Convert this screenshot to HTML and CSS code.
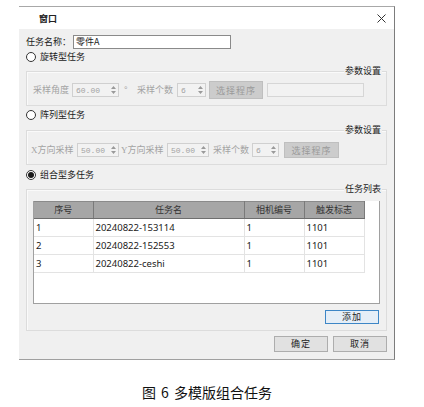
FILE: index.html
```html
<!DOCTYPE html>
<html lang="zh">
<head>
<meta charset="utf-8">
<title>窗口</title>
<link rel="stylesheet" href="styles.css">
</head>
<body>
<div class="window">
  <div class="titlebar">
    <span class="title">窗口</span>
    <svg class="close" width="9" height="9" viewBox="0 0 9 9"><path d="M0.5 0.5 L8.5 8.5 M8.5 0.5 L0.5 8.5" stroke="#333" stroke-width="1" fill="none"/></svg>
  </div>
  <div class="body">
    <div class="name-row">
      <span class="lbl">任务名称：</span>
      <div class="name-input">零件A</div>
    </div>
    <div class="radio-row r1"><span class="radio"></span><span>旋转型任务</span></div>
    <div class="group g1">
      <span class="legend">参数设置</span>
      <span class="dis w36">采样角度</span>
      <div class="spin s47"><span>60.00</span><svg width="5" height="8" viewBox="0 0 5 8"><path d="M0 3 L2.5 0 L5 3Z M0 5 L2.5 8 L5 5Z" fill="#9a9a9a"/></svg></div>
      <span class="dis deg">°</span>
      <span class="dis w36 ml-a">采样个数</span>
      <div class="spin s29"><span>6</span><svg width="5" height="8" viewBox="0 0 5 8"><path d="M0 3 L2.5 0 L5 3Z M0 5 L2.5 8 L5 5Z" fill="#9a9a9a"/></svg></div>
      <div class="btn-dis b1">选择程序</div>
      <div class="field"></div>
    </div>
    <div class="radio-row r2"><span class="radio"></span><span>阵列型任务</span></div>
    <div class="group g2">
      <span class="legend">参数设置</span>
      <span class="dis w45"><span class="lat">X</span>方向采样</span>
      <div class="spin s42"><span>50.00</span><svg width="5" height="8" viewBox="0 0 5 8"><path d="M0 3 L2.5 0 L5 3Z M0 5 L2.5 8 L5 5Z" fill="#9a9a9a"/></svg></div>
      <span class="dis w45 ml2"><span class="lat">Y</span>方向采样</span>
      <div class="spin s42 ml3"><span>50.00</span><svg width="5" height="8" viewBox="0 0 5 8"><path d="M0 3 L2.5 0 L5 3Z M0 5 L2.5 8 L5 5Z" fill="#9a9a9a"/></svg></div>
      <span class="dis w36 ml4">采样个数</span>
      <div class="spin s27"><span>6</span><svg width="5" height="8" viewBox="0 0 5 8"><path d="M0 3 L2.5 0 L5 3Z M0 5 L2.5 8 L5 5Z" fill="#9a9a9a"/></svg></div>
      <div class="btn-dis b2">选择程序</div>
    </div>
    <div class="radio-row r3"><span class="radio checked"></span><span>组合型多任务</span></div>
    <div class="group g3">
      <span class="legend">任务列表</span>
      <div class="tablebox">
        <table>
          <thead>
            <tr><th class="c1">序号</th><th class="c2">任务名</th><th class="c3">相机编号</th><th class="c4">触发标志</th></tr>
          </thead>
          <tbody>
            <tr><td>1</td><td>20240822-153114</td><td>1</td><td>1101</td></tr>
            <tr><td>2</td><td>20240822-152553</td><td>1</td><td>1101</td></tr>
            <tr><td>3</td><td>20240822-ceshi</td><td>1</td><td>1101</td></tr>
          </tbody>
        </table>
      </div>
      <div class="add-row"><div class="btn btn-focus">添加</div></div>
    </div>
    <div class="btn-row">
      <div class="btn">确定</div>
      <div class="btn">取消</div>
    </div>
  </div>
</div>
<div class="caption">图 6 多模版组合任务</div>
</body>
</html>
```

FILE: styles.css
```css
* { box-sizing: border-box; }
html, body { margin: 0; padding: 0; background: #ffffff; }
body {
  width: 424px;
  height: 407px;
  overflow: hidden;
  font-family: "Noto Sans CJK SC", "Noto Sans", sans-serif;
  font-size: 9px;
  color: #1a1a1a;
}
.window {
  margin: 6px 0 0 19px;
  width: 376px;
  border-top: 1px solid #a8a8a8;
  border-right: 1px solid #7c7c7c;
  border-bottom: 1px solid #a0a0a0;
}
.titlebar {
  height: 22px;
  background: #ffffff;
  display: flex;
  align-items: center;
  justify-content: space-between;
  padding: 0 8px 0 20px;
}
.title { font-size: 9px; color: #222; font-weight: bold; line-height: 10px; margin-top: 1px; }
.close { margin-top: 1px; }
.body {
  background: #f0f0f0;
  padding: 6px 7px 7px 7px;
}
.name-row {
  height: 14px;
  display: flex;
  align-items: center;
}
.lbl { width: 47px; line-height: 12px; }
.name-input {
  width: 158px;
  height: 14px;
  border: 1px solid #8a8a8a;
  background: #fff;
  line-height: 11px;
  padding-left: 2px;
  font-size: 9px;
}
.radio-row {
  height: 14px;
  display: flex;
  align-items: center;
  line-height: 12px;
}
.r1 { margin-top: 1px; }
.r2 { margin-top: 2px; }
.r3 { margin-top: 3px; }
.radio {
  width: 10px;
  height: 10px;
  border: 1px solid #333;
  border-radius: 50%;
  background: #fff;
  margin-right: 4px;
  position: relative;
  display: flex;
  align-items: center;
  justify-content: center;
}
.radio.checked::after {
  content: "";
  width: 6px;
  height: 6px;
  border-radius: 50%;
  background: #1a1a1a;
}
.group {
  position: relative;
  border: 1px solid #dcdcdc;
  box-shadow: inset 1px 1px 0 #fafafa;
}
.legend {
  position: absolute;
  top: -7px;
  right: 4px;
  background: #f0f0f0;
  padding: 0 1px;
  line-height: 12px;
  color: #222;
}
.g1 {
  margin-top: 7px;
  height: 35px;
  display: flex;
  align-items: center;
  padding: 3px 0 0 6px;
}
.g2 {
  margin-top: 8px;
  height: 35px;
  display: flex;
  align-items: center;
  padding: 5px 0 0 4px;
}
.g3 {
  margin-top: 7px;
  height: 142px;
  padding: 11px 6px 0 6px;
}
.dis { color: #a3a3a3; line-height: 12px; white-space: nowrap; }
.w36 { width: 36px; }
.w45 { width: 45px; }
.lat { font-family: "Liberation Serif", serif; font-size: 9px; }
.deg { margin-left: 5px; width: 4px; font-family: "Liberation Sans", sans-serif; }
.ml-a { margin-left: 9px; }
.ml2 { margin-left: 2px; }
.ml3 { margin-left: 2px; }
.ml4 { margin-left: 4px; }
.spin {
  height: 14px;
  border: 1px solid #d0d0d0;
  background: #f2f2f2;
  display: flex;
  align-items: center;
  justify-content: space-between;
  padding: 0 2px 0 3px;
  margin-left: 3px;
  font-family: "Liberation Mono", monospace;
  font-size: 8px;
  color: #a3a3a3;
}
.s47 { width: 47px; }
.s29 { width: 29px; margin-left: 4px; }
.s42 { width: 42px; margin-left: 1px; }
.s27 { width: 27px; }
.btn-dis {
  background: #cccccc;
  border: 1px solid #bfbfbf;
  color: #9a9a9a;
  display: flex;
  align-items: center;
  justify-content: center;
  letter-spacing: 1px;
}
.b1 { width: 54px; height: 18px; margin-left: 3px; }
.b2 { width: 55px; height: 16px; margin-left: 5px; }
.field {
  width: 97px;
  height: 14px;
  margin-left: 4px;
  border: 1px solid #d6d6d6;
  background: #f2f2f2;
}
.tablebox {
  width: 347px;
  height: 103px;
  border: 1px solid #a0a0a0;
  border-top: none;
  background: #fff;
}
table {
  border-collapse: collapse;
  table-layout: fixed;
  font-family: "Noto Sans", "Noto Sans CJK SC", sans-serif;
  font-size: 9.5px;
}
th {
  height: 17px;
  background: #a6a6a6;
  border-right: 1px solid #7a7a7a;
  border-bottom: 1px solid #6e6e6e;
  border-top: 1px solid #8a8a8a;
  font-family: "Noto Sans CJK SC", sans-serif;
  font-size: 9px;
  font-weight: normal;
  color: #333;
  text-align: center;
  padding: 0;
  line-height: 12px;
}
.c1 { width: 59px; }
.c2 { width: 151px; }
.c3 { width: 60px; }
.c4 { width: 60px; }
td {
  height: 18px;
  border-right: 1px solid #e3e3e3;
  border-bottom: 1px solid #e3e3e3;
  padding: 0 0 0 2px;
  color: #1a1a1a;
  line-height: 12px;
  white-space: nowrap;
  overflow: hidden;
}
.add-row {
  display: flex;
  justify-content: flex-end;
  margin-top: 6px;
  padding-right: 1px;
}
.btn {
  width: 54px;
  height: 16px;
  background: #e1e1e1;
  border: 1px solid #adadad;
  display: flex;
  align-items: center;
  justify-content: center;
  color: #222;
  letter-spacing: 1px;
  line-height: 12px;
}
.btn-focus {
  height: 14px;
  border: 1px solid #3d86c6;
  background: #e5eef7;
}
.btn-row {
  margin-top: 5px;
  height: 16px;
  display: flex;
  justify-content: flex-end;
  gap: 5px;
}
.caption {
  width: 376px;
  margin: 24px 0 0 19px;
  text-align: center;
  font-family: "Noto Sans CJK SC", sans-serif;
  font-size: 14px;
  line-height: 16px;
  word-spacing: 2px;
  color: #111;
}
```
